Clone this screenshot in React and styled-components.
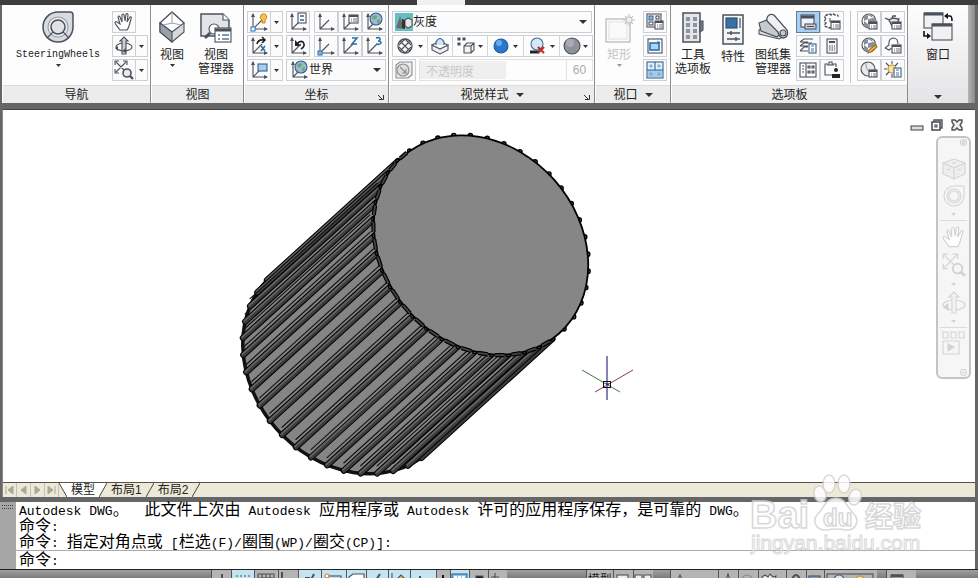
import React from 'react';
import styled, { createGlobalStyle } from 'styled-components';

const GlobalStyle = createGlobalStyle`
  * {
    box-sizing: border-box;
  }
  body {
    margin: 0;
    overflow: hidden;
    font-family: 'Liberation Sans', 'Noto Sans CJK SC', sans-serif;
    font-size: 12px;
    color: #222;
  }
  button, input, select {
    font: inherit;
    color: inherit;
    margin: 0;
    padding: 0;
    border: 0;
    background: none;
  }
  svg {
    display: block;
    flex: none;
  }
`;

const Page = styled.div`
  position: relative;
  display: flex;
  flex-direction: column;
  height: 100vh;
  background: #666;
  overflow: hidden;
`;

const TabStrip = styled.div`
  display: flex;
  justify-content: center;
  flex: 0 0 5px;
  padding-right: 96px;
  background: #3d3d3d;
`;

const ActiveTab = styled.div`
  width: 48px;
  background: #f0f0f0;
`;

/* ---------- ribbon ---------- */

const Ribbon = styled.div`
  display: flex;
  flex: 0 0 98px;
  margin: 0 3px 0 2px;
  background: #fdfdfd;
`;

const PanelBox = styled.section`
  display: flex;
  flex-direction: column;
  flex: ${({ $grow }) => ($grow ? 1 : 0)} 0 ${({ $width }) => $width}px;
  border-right: 1px solid #8d8d8d;
`;

const PanelBody = styled.div`
  display: flex;
  flex: 1;
  gap: ${({ $gap }) => $gap ?? 4}px;
  padding: 6px 0 0 ${({ $pad }) => $pad ?? 3}px;
`;

const PanelTitle = styled.div`
  display: flex;
  align-items: center;
  justify-content: center;
  height: 18px;
  margin-left: 1px;
  position: relative;
  border-top: 1px solid #dcdcdc;
  background: #ececec;
  line-height: 16px;
`;

const TitleButton = styled.button`
  display: flex;
  align-items: center;
  gap: 7px;
`;

const Launcher = styled.button`
  position: absolute;
  right: 4px;
  bottom: 3px;
`;

const Column = styled.div`
  display: flex;
  flex-direction: column;
  gap: 2px;
`;

const Row = styled.div`
  display: flex;
  gap: ${({ $gap }) => $gap || 0}px;
`;

const ToolGrid = styled.div`
  display: grid;
  grid-template-columns: 24px 24px;
  grid-auto-rows: 22px;
  row-gap: 2px;
  margin-left: ${({ $left }) => $left || 0}px;
`;

const Divider = styled.div`
  width: 1px;
  height: 72px;
  margin: 0 6px;
  background: #c4c4c4;
`;

const IconButton = styled.button`
  display: flex;
  align-items: center;
  justify-content: center;
  width: 24px;
  height: 22px;
  border: 1px solid ${({ $active }) => ($active ? '#5d7f9f' : '#ccd0d4')};
  background: ${({ $active }) => ($active ? '#a9d0f3' : '#fbfbfb')};
`;

const DropButton = styled(IconButton)`
  width: 12px;
  border-left: 0;
`;

const BigButton = styled.button`
  display: flex;
  flex-direction: column;
  align-items: center;
  width: ${({ $width }) => $width}px;
  height: ${({ $tall }) => ($tall ? '88px' : '72px')};
  color: ${({ disabled }) => (disabled ? '#c2c2c2' : '#222')};
  line-height: 14px;
  white-space: nowrap;
  & > svg:first-child {
    margin-bottom: 5px;
  }
  & > svg:last-child {
    margin-top: ${({ $tall }) => ($tall ? 'auto' : '2px')};
  }
`;

const MonoLabel = styled.span`
  font-family: 'Liberation Mono', monospace;
  font-size: 10px;
`;

const SelectBox = styled.label`
  display: flex;
  align-items: center;
  width: ${({ $width }) => $width}px;
  height: 22px;
  padding: 0 4px 0 2px;
  border: 1px solid #ccd0d4;
  background: #fbfbfb;
`;

const Select = styled.select`
  flex: 1;
  min-width: 0;
  appearance: none;
  outline: 0;
`;

const StyleRow = styled.div`
  display: grid;
  grid-template-columns: 35px 25px 35px 36px 36px 31px;
  height: 22px;
  border: 1px solid #ccd0d4;
`;

const StyleButton = styled.button`
  display: flex;
  align-items: center;
  justify-content: space-evenly;
  border-right: 1px solid #d3d6d9;
  &:last-child {
    border-right: 0;
  }
`;

const Opacity = styled.label`
  display: grid;
  grid-template-columns: 146px 26px;
  align-items: center;
  width: 174px;
  height: 22px;
  border: 1px solid #e2e2e2;
  color: #c9c9c9;
`;

const OpacityName = styled.span`
  grid-area: 1 / 1;
  padding-left: 6px;
  pointer-events: none;
`;

const OpacityRange = styled.input`
  grid-area: 1 / 1;
  appearance: none;
  width: 100%;
  height: 18px;
  background: linear-gradient(to right, #efefef 59%, #fdfdfd 59%);
  &::-webkit-slider-thumb {
    appearance: none;
    width: 0;
    height: 0;
  }
`;

const OpacityValue = styled.output`
  height: 20px;
  border-left: 1px solid #e2e2e2;
  line-height: 20px;
  text-align: center;
  color: #aaa;
`;

const WindowPanel = styled.div`
  display: flex;
  flex: 0 0 60px;
  justify-content: center;
  padding-top: 6px;
  background: linear-gradient(#fdfdfd, #e4e4e6);
`;

const RibbonEnd = styled.div`
  flex: 0 0 7px;
  background: linear-gradient(to right, #b5b5b5, #8a8a8a);
`;

/* ---------- drawing window ---------- */

const Drawing = styled.main`
  position: relative;
  display: flex;
  flex-direction: column;
  flex: 1;
  min-height: 0;
  margin: 6px 3px 5px 2px;
  border-top: 1px solid #444;
  border-left: 1px solid #888;
  background: #fff;
`;

const Canvas = styled.svg`
  flex: 1;
  width: 100%;
  min-height: 0;
`;

const WindowButtons = styled.div`
  position: absolute;
  top: 8px;
  right: 11px;
  display: flex;
  gap: 6px;
`;

const NavBar = styled.nav`
  position: absolute;
  top: 26px;
  right: 4px;
  display: flex;
  flex-direction: column;
  align-items: center;
  width: 35px;
  height: 243px;
  padding: 17px 0 0;
  border: 2px solid #c4c4c4;
  border-radius: 6px;
  background: #f6f6f6;
`;

const NavButton = styled.button`
  height: ${({ $height }) => $height}px;
`;

const NavRule = styled.div`
  width: 27px;
  height: 1px;
  background: #dcdcdc;
`;

const NavCorner = styled.button`
  position: absolute;
  right: 2px;
  ${({ $end }) => ($end ? 'bottom: 1px' : 'top: 1px')};
`;

const SheetTabs = styled.div`
  display: flex;
  flex: 0 0 15px;
  border-top: 1px solid #55533f;
  background: #ece9d8;
`;

const SheetStep = styled.button`
  display: flex;
  align-items: center;
  justify-content: center;
  width: 14px;
  border-right: 1px solid #c5c2b2;
`;

const SheetTab = styled.button`
  padding: 0 4px;
  background: ${({ $active }) => ($active ? '#fff' : 'none')};
  line-height: 14px;
  white-space: nowrap;
`;

/* ---------- command line ---------- */

const CommandArea = styled.section`
  display: flex;
  flex: 0 0 67px;
  margin-right: 3px;
  background: #fff;
`;

const Grip = styled.div`
  width: 16px;
  padding: 3px 2px;
  background: #a6a6a6;
`;

const CommandBody = styled.div`
  flex: 1;
  min-width: 0;
  font-family: 'Liberation Mono', 'Noto Sans CJK SC', monospace;
  font-size: 13px;
  color: #000;
`;

const History = styled.div`
  height: 49px;
  padding-left: 3px;
  border-bottom: 1px solid #aaa;
`;

const Line = styled.div`
  display: flex;
  align-items: baseline;
  gap: 8px;
  height: 16px;
  line-height: 12px;
  white-space: pre;
`;

const Wide = styled.span`
  font-family: 'Noto Sans CJK SC', sans-serif;
  font-size: 16px;
`;

const Prompt = styled.label`
  display: flex;
  align-items: baseline;
  height: 18px;
  padding-left: 3px;
  line-height: 14px;
`;

const PromptInput = styled.input`
  flex: 1;
  margin-left: 8px;
  outline: 0;
`;

const Watermark = styled.svg`
  position: absolute;
  right: 50px;
  bottom: 20px;
`;

/* ---------- status bar ---------- */

const StatusBar = styled.footer`
  display: flex;
  flex: 0 0 9px;
  overflow: hidden;
  border-top: 1px solid #222;
  background: linear-gradient(#a0a0a0, #7c7c7c);
`;

const StatusButton = styled.button`
  width: ${({ $width }) => $width}px;
  height: 20px;
  border-left: 1px solid #555;
  background: ${({ $on }) => ($on ? '#c3e4f0' : '#b4b4b4')};
  overflow: hidden;
  white-space: nowrap;
  line-height: 18px;
`;

const StatusSpace = styled.div`
  flex: ${({ $grow }) => $grow};
`;

/* ---------- icons ---------- */

const INK = '#4b515b';

function Icon({ w = 20, h = 20, color = INK, children }) {
    return (
        <svg width={w} height={h} viewBox={`0 0 ${w} ${h}`} fill="none" stroke={color} strokeWidth="1.1" aria-hidden="true">
            {children}
        </svg>
    );
}

function Arrow({ size = 5, color = '#333' }) {
    return (
        <svg width={size} height={size === 5 ? 3 : 4} viewBox="0 0 8 4" preserveAspectRatio="none">
            <path d="M0 0H8L4 4Z" fill={color} />
        </svg>
    );
}

function WheelShape() {
    return (
        <>
            <path d="M16 1H28Q31 1 31 4V16A15 15 0 1 1 16 1Z" fill="#d7dae0" strokeWidth="1.5" />
            <circle cx="16" cy="16" r="10" fill="#eceef1" stroke="#9a9ea6" />
            <circle cx="16" cy="16" r="7" fill="#dfe2e6" strokeWidth="1.5" />
            <path d="M11 21L5 27M21 21L27 27" />
        </>
    );
}

function HandShape() {
    return <path d="M6 18C4 15 2 13 1 11Q1 9 3 10L6 12L4 5Q5 3 6 5L8 10L8 3Q9 1 10 3L11 9L12 2Q14 1 14 3L13 10L16 5Q18 4 17 7L15 14Q14 17 13 18Z" fill="#fff" />;
}

function OrbitShape() {
    return (
        <>
            <ellipse cx="10" cy="11" rx="8" ry="4" />
            <path d="M8 18V5H6L10 1L14 5H12V18Z" fill="#c9ced6" />
            <path d="M1 12L4 10V15ZM8 15L12 12V17Z" fill={INK} stroke="none" />
        </>
    );
}

function ZoomShape({ lens = '#e6e8ec' }) {
    return (
        <>
            <path d="M2 2L11 11M12 2L2 12M1 5V1H5M9 1H13V5M1 9V13H5" />
            <circle cx="13" cy="13" r="4" fill={lens} strokeWidth="1.6" />
            <path d="M16 16L19 19" strokeWidth="2.4" />
        </>
    );
}

function Axes({ children }) {
    return (
        <Icon>
            <path d="M4 2V17H18M4 17L13 8" />
            <path d="M2 5L4 1L6 5ZM15 15L19 17L15 19Z" fill={INK} stroke="none" />
            {children}
        </Icon>
    );
}

function Globe({ x = 12, y = 7, r = 6 }) {
    return (
        <g>
            <circle cx={x} cy={y} r={r} fill="#8fbde0" stroke="#3f5e7c" />
            <path d={`M${x - 4} ${y - 2}q3 -3 5 -1q0 3 -2 3q-2 2 -3 -2M${x + 1} ${y + 1}q3 -2 3 1q-1 3 -3 2z`} fill="#7da36a" stroke="none" />
        </g>
    );
}

function ListShape({ x, y, w = 9, h = 8 }) {
    return (
        <g>
            <rect x={x} y={y} width={w} height={h} fill="#fff" />
            <path d={`M${x} ${y + 1}h${w}`} strokeWidth="2" />
            <path d={`M${x + 2} ${y + 4}h1m1 0h${w - 5}M${x + 2} ${y + 6}h1m1 0h${w - 5}`} strokeWidth="0.8" />
        </g>
    );
}

function CalcShape({ x, y, w = 7, h = 9 }) {
    return (
        <g stroke="#35618f">
            <rect x={x} y={y} width={w} height={h} fill="#fff" />
            <path d={`M${x + 2} ${y + 2}h${w - 4}M${x + 2} ${y + 5}h${w - 4}M${x + 2} ${y + 7}h${w - 4}`} strokeWidth="0.9" />
        </g>
    );
}

function MatBall() {
    return (
        <g>
            <circle cx="9" cy="8" r="7" fill="#fff" />
            <path d="M4 3L8 2V6L4 8ZM8 6L13 5V10L8 11ZM4 8L8 11V15L4 13ZM8 2L11 1L13 5ZM13 10L16 8V5L13 5Z" fill="#8a9099" stroke="none" />
        </g>
    );
}

function MoreButton() {
    return <DropButton aria-label="更多"><Arrow /></DropButton>;
}

/* ---------- model ---------- */

const RIBS = 40;
const CENTER = { x: 478, y: 135 };
const AXIS = { x: -131, y: 119 };
const MAJOR = 118;
const MINOR = 98;
const TILT = (48.6 * Math.PI) / 180;

const U = { x: Math.cos(TILT), y: Math.sin(TILT) };
const V = { x: -Math.sin(TILT), y: Math.cos(TILT) };

function rimPoint(t, grow = 0) {
    const a = (MAJOR + grow) * Math.cos(t);
    const b = (MINOR + grow) * Math.sin(t);
    return { x: CENTER.x + a * U.x + b * V.x, y: CENTER.y + a * U.y + b * V.y };
}

// positive where the side of the cylinder looks towards the viewer
function facing(t) {
    const nx = (Math.cos(t) / MAJOR) * U.x + (Math.sin(t) / MINOR) * V.x;
    const ny = (Math.cos(t) / MAJOR) * U.y + (Math.sin(t) / MINOR) * V.y;
    return nx * AXIS.x + ny * AXIS.y;
}

const angles = Array.from({ length: RIBS }, (_, i) => ((i * 9 + 5) * Math.PI) / 180);
const frontRibs = angles.filter((t) => facing(t) > -0.1).sort((a, b) => facing(a) - facing(b));

function Rib({ t }) {
    const p = rimPoint(t);
    const line = (dx, dy) => `M${p.x + dx} ${p.y + dy}l${AXIS.x} ${AXIS.y}`;
    return (
        <g strokeLinecap="round">
            {facing(t) > 0.55 && (
                <path d={`M${p.x - 4} ${p.y - 4}l${AXIS.x * 0.97} ${AXIS.y * 0.97}`} stroke="#151515" strokeWidth="1.2" />
            )}
            <path d={line(0, 0)} stroke="#000" strokeWidth="6.4" />
            <path d={line(0, 0)} stroke="#3c3c3c" strokeWidth="4.4" />
            <path d={line(-0.8, -0.8)} stroke="#636363" strokeWidth="1.7" />
        </g>
    );
}

function Cylinder() {
    const tilt = `rotate(48.6 ${CENTER.x} ${CENTER.y})`;
    const side = angles.filter((t) => facing(t) > 0).map((t) => rimPoint(t));
    const first = side[0];
    const last = side[side.length - 1];
    return (
        <g fill="none">
            <g transform={`translate(${AXIS.x} ${AXIS.y})`}>
                <ellipse cx={CENTER.x} cy={CENTER.y} rx={MAJOR} ry={MINOR} transform={tilt} fill="#858585" stroke="#111" strokeWidth="3.5" />
            </g>
            <path
                d={`M${first.x} ${first.y}l${AXIS.x} ${AXIS.y}L${last.x + AXIS.x} ${last.y + AXIS.y}L${last.x} ${last.y}Z`}
                fill="#858585"
            />
            {frontRibs.map((t) => <Rib key={t} t={t} />)}
            {angles.map((t) => {
                const p = rimPoint(t);
                return <circle key={t} cx={p.x} cy={p.y} r="2.2" fill="#666" stroke="#000" strokeWidth="1.3" />;
            })}
            <ellipse cx={CENTER.x} cy={CENTER.y} rx={MAJOR} ry={MINOR} transform={tilt} fill="#868686" stroke="#000" strokeWidth="1.8" />
            {frontRibs.map((t) => {
                const a = rimPoint(t + 0.035, 0.5);
                const b = rimPoint(t + 0.125, 0.5);
                return (
                    <g key={t}>
                        <path d={`M${a.x} ${a.y}L${b.x} ${b.y}`} stroke="#000" strokeWidth="4.2" />
                        <path d={`M${a.x} ${a.y}L${b.x} ${b.y}`} stroke="#444" strokeWidth="1.8" />
                    </g>
                );
            })}
        </g>
    );
}

function Crosshair() {
    return (
        <g fill="none">
            <path d="M579 260L617 282" stroke="#3d7a45" />
            <path d="M630 260L592 282" stroke="#8a3c46" />
            <path d="M604 246V290" stroke="#5a5a9c" strokeWidth="1.5" />
            <rect x="600.5" y="271.5" width="7" height="6" stroke="#111" />
            <path d="M603 274H606" stroke="#111" />
        </g>
    );
}

/* ---------- ribbon panels ---------- */

function Panel({ title, width, grow, pad, gap, launcher, drop, children }) {
    return (
        <PanelBox $width={width} $grow={grow}>
            <PanelBody $pad={pad} $gap={gap}>{children}</PanelBody>
            <PanelTitle>
                {drop ? <TitleButton>{title}<Arrow size={8} /></TitleButton> : title}
                {launcher && (
                    <Launcher aria-label={title}>
                        <svg width="6" height="6" viewBox="0 0 6 6" fill="none" stroke="#333">
                            <path d="M0 1L4 5M1 5.5H5.5V1" />
                        </svg>
                    </Launcher>
                )}
            </PanelTitle>
        </PanelBox>
    );
}

function NavigatePanel() {
    return (
        <Panel title="导航" width={149} pad={6}>
            <BigButton $width={100}>
                <Icon w={32} h={32}><WheelShape /></Icon>
                <MonoLabel>SteeringWheels</MonoLabel>
                <Arrow />
            </BigButton>
            <Column>
                <IconButton aria-label="平移"><Icon><HandShape /></Icon></IconButton>
                <Row>
                    <IconButton aria-label="动态观察"><Icon><OrbitShape /></Icon></IconButton>
                    <MoreButton />
                </Row>
                <Row>
                    <IconButton aria-label="范围"><Icon><ZoomShape /></Icon></IconButton>
                    <MoreButton />
                </Row>
            </Column>
        </Panel>
    );
}

function ViewPanel() {
    return (
        <Panel title="视图" width={93} pad={4}>
            <BigButton $width={34}>
                <Icon w={26} h={32}>
                    <path d="M13 1L25 12V21L13 31L1 21V12Z" fill="#d5d8dd" />
                    <path d="M13 1L25 12L13 21L1 12Z" fill="#fff" />
                    <path d="M1 12L13 21V31L1 21Z" fill="#9aa0a9" />
                    <path d="M13 1V12L4 14M13 12L22 14" stroke="#a0a5ad" />
                </Icon>
                视图
                <Arrow />
            </BigButton>
            <BigButton $width={46}>
                <Icon w={32} h={32}>
                    <path d="M1 3H23L29 9V25H1Z" fill="#e2e4e9" strokeWidth="1.5" />
                    <path d="M23 3V9H29" fill="#fff" />
                    <circle cx="14" cy="18" r="5" fill="#fff" />
                    <path d="M10 22L5 27" strokeWidth="3" />
                    <rect x="15" y="17" width="16" height="14" fill="#fff" />
                    <path d="M15 19H31" strokeWidth="3" />
                    <path d="M18 24H20M22 24H29M18 28H20M22 28H29" stroke="#55779c" strokeWidth="1.5" />
                </Icon>
                <span>视图<br />管理器</span>
            </BigButton>
        </Panel>
    );
}

function CoordinatesPanel() {
    return (
        <Panel title="坐标" width={145} gap={3} launcher>
            <Column>
                <Row>
                    <IconButton aria-label="UCS 图标">
                        <Axes>
                            <rect x="2" y="15" width="4" height="4" fill="#fff" stroke="#2c7fc0" />
                            <path d="M13 11V8Q10 6 12 3Q15 0 17 3Q19 6 16 8V11Z" fill="#f6c14d" stroke="#c98a1c" strokeWidth="1" />
                        </Axes>
                    </IconButton>
                    <MoreButton />
                </Row>
                <Row>
                    <IconButton aria-label="绕 X 轴旋转">
                        <Axes>
                            <path d="M8 8Q9 3 15 4M13 1L16 4L13 7" stroke="#222" strokeWidth="1.6" />
                            <path d="M12 10L16 15M16 10L12 15" stroke="#2c6fae" strokeWidth="1.6" />
                        </Axes>
                    </IconButton>
                    <MoreButton />
                </Row>
                <Row>
                    <IconButton aria-label="UCS 视图">
                        <Axes><rect x="9" y="4" width="9" height="7" fill="#a7cdf0" stroke="#35618f" /></Axes>
                    </IconButton>
                    <MoreButton />
                </Row>
            </Column>
            <Column>
                <Row $gap={4}>
                    <IconButton aria-label="UCS">
                        <Axes><rect x="10" y="1" width="8" height="10" fill="#fff" /><path d="M12 4H16M12 8H16" stroke="#35618f" strokeWidth="1.6" /></Axes>
                    </IconButton>
                    <Row>
                        <IconButton aria-label="UCS 原点"><Axes /></IconButton>
                        <IconButton aria-label="命名 UCS"><Axes><ListShape x={9} y={3} /></Axes></IconButton>
                        <IconButton aria-label="世界 UCS"><Axes><Globe /></Axes></IconButton>
                    </Row>
                </Row>
                <Row $gap={4}>
                    <IconButton aria-label="上一个 UCS">
                        <Axes>
                            <path d="M9 8Q12 4 15 6Q18 10 13 13" stroke="#222" strokeWidth="1.6" />
                            <path d="M7 4V10H13Z" fill="#222" stroke="none" />
                        </Axes>
                    </IconButton>
                    <Row>
                        <IconButton aria-label="原点"><Axes><rect x="2" y="15" width="4" height="4" fill="#7db7e6" stroke="#2c7fc0" /></Axes></IconButton>
                        <IconButton aria-label="Z 轴矢量"><Axes><path d="M12 2H17L12 8H17" stroke="#2c6fae" strokeWidth="1.6" /></Axes></IconButton>
                        <IconButton aria-label="三点"><Axes><path d="M12 2Q16 1 16 3Q16 5 14 5Q17 5 17 7Q16 9 12 8" stroke="#2c6fae" strokeWidth="1.6" /></Axes></IconButton>
                    </Row>
                </Row>
                <SelectBox $width={100}>
                    <Axes><Globe /></Axes>
                    <Select aria-label="坐标系" defaultValue="世界"><option>世界</option></Select>
                    <Arrow size={8} />
                </SelectBox>
            </Column>
        </Panel>
    );
}

function VisualStylesPanel() {
    return (
        <Panel title="视觉样式" width={206} drop launcher>
            <Column>
                <SelectBox $width={200}>
                    <Icon w={18} h={18}>
                        <rect width="18" height="18" fill="#63bfc4" stroke="none" />
                        <path d="M1 15L5 3L9 16Z" fill="#6a6a6a" stroke="none" />
                        <path d="M10 7L13 5L17 7V13L13 15L10 13Z" fill="#e8e8e8" stroke="#555" />
                        <path d="M7 6L10 7V16L7 15Z" fill="#333" stroke="none" />
                    </Icon>
                    <Select aria-label="视觉样式" defaultValue="灰度"><option>灰度</option></Select>
                    <Arrow size={8} />
                </SelectBox>
                <StyleRow>
                    <StyleButton aria-label="X 射线">
                        <Icon w={16} h={16}>
                            <circle cx="8" cy="8" r="7" strokeWidth="1.3" />
                            <path d="M3 3L13 13M13 3L3 13M8 1L2 7M8 1L14 7M8 15L2 9M8 15L14 9" strokeWidth="1.1" />
                        </Icon>
                        <Arrow />
                    </StyleButton>
                    <StyleButton aria-label="面样式">
                        <Icon w={18} h={18}>
                            <path d="M1 8L9 12L17 8V13L9 17L1 13Z" fill="#eceef1" />
                            <path d="M1 8L9 4L17 8L9 12Z" fill="#fff" />
                            <path d="M5 8V5Q9 -2 13 5V8" fill="#cfe5f7" stroke="#35618f" />
                        </Icon>
                    </StyleButton>
                    <StyleButton aria-label="边">
                        <Icon w={18} h={18}>
                            <path d="M1 1H3V3H1ZM6 1H8V3H6ZM1 6H3V8H1Z" fill={INK} />
                            <path d="M7 9L10 6H17V13L14 16H7ZM7 9H14V16M14 9L17 6" fill="#f2f2f2" />
                        </Icon>
                        <Arrow />
                    </StyleButton>
                    <StyleButton aria-label="光源">
                        <Icon w={16} h={16}>
                            <circle cx="8" cy="8" r="7" fill="#2878cf" stroke="#1f5c9e" />
                            <circle cx="6" cy="5" r="3" fill="#6caae8" stroke="none" />
                        </Icon>
                        <Arrow />
                    </StyleButton>
                    <StyleButton aria-label="无阴影">
                        <Icon w={18} h={18}>
                            <circle cx="9" cy="7" r="6" fill="#d4e8f7" stroke="#46729c" />
                            <path d="M2 15H11" stroke="#222" strokeWidth="3" />
                            <path d="M10 10L16 16M16 10L10 16" stroke="#c02b2b" strokeWidth="2.2" />
                        </Icon>
                        <Arrow />
                    </StyleButton>
                    <StyleButton aria-label="材质">
                        <Icon w={18} h={18}>
                            <circle cx="9" cy="9" r="8" fill="#8e939a" />
                            <circle cx="7" cy="6" r="4" fill="#a9adb3" stroke="none" />
                        </Icon>
                        <Arrow />
                    </StyleButton>
                </StyleRow>
                <Row $gap={3}>
                    <IconButton aria-label="X 射线效果">
                        <Icon color="#8e8e8e">
                            <path d="M2 5L6 2H18V15L14 18H2Z" fill="#ececec" />
                            <circle cx="9" cy="10" r="6" fill="#ddd" />
                            <path d="M6 7L12 13M12 9V13H8" />
                        </Icon>
                    </IconButton>
                    <Opacity>
                        <OpacityRange type="range" min="0" max="100" defaultValue="60" disabled />
                        <OpacityName>不透明度</OpacityName>
                        <OpacityValue>60</OpacityValue>
                    </Opacity>
                </Row>
            </Column>
        </Panel>
    );
}

function ViewportPanel() {
    return (
        <Panel title="视口" width={76} pad={6} gap={6} drop>
            <BigButton $width={36} disabled>
                <Icon w={32} h={32} color="#c4c4c4">
                    <rect x="3" y="8" width="24" height="23" fill="#fafafa" strokeWidth="1.5" />
                    <rect x="6" y="11" width="18" height="17" stroke="#e2e2e2" />
                    <path d="M26 3V15M20 9H32M22 5L30 13M30 5L22 13" />
                    <circle cx="26" cy="9" r="3" fill="#f6efe4" />
                </Icon>
                矩形
                <Arrow color="#999" />
            </BigButton>
            <Column>
                <IconButton aria-label="命名视口">
                    <Icon w={18} h={18}>
                        <rect x="1" y="1" width="14" height="13" fill="#fff" />
                        <rect x="3" y="3" width="4" height="4" fill="#86c3ec" stroke="#35618f" />
                        <rect x="10" y="3" width="3" height="3" />
                        <rect x="3" y="9" width="4" height="3" />
                        <ListShape x={9} y={8} w={8} h={8} />
                    </Icon>
                </IconButton>
                <IconButton aria-label="裁剪视口">
                    <Icon w={18} h={18}>
                        <rect x="2" y="2" width="14" height="14" fill="#fff" />
                        <rect x="4" y="6" width="9" height="7" fill="#a9d4f3" stroke="#2c6fae" strokeWidth="1.6" />
                        <path d="M12 4V6M14 5L12 7" stroke="#2c6fae" />
                    </Icon>
                </IconButton>
                <IconButton aria-label="合并视口">
                    <Icon w={18} h={18}>
                        <rect x="1" y="1" width="16" height="16" fill="#e6f1fa" stroke="#35618f" />
                        <rect x="2" y="9" width="14" height="7" fill="#9dccf0" stroke="none" />
                        <path d="M9 1V9M1 9H17" stroke="#35618f" />
                        <path d="M4 4H6V6H4ZM12 4H14V6H12ZM4 12H6V14H4ZM12 12H14V14H12Z" stroke="#7ba3c6" strokeWidth="1" />
                    </Icon>
                </IconButton>
            </Column>
        </Panel>
    );
}

function PalettesPanel() {
    return (
        <Panel title="选项板" width={237} pad={2} gap={0} grow>
            <BigButton $width={40}>
                <Icon w={24} h={32}>
                    <rect x="2" y="2" width="17" height="29" fill="#e4e6ea" strokeWidth="1.5" />
                    <path d="M19 10H22V19L19 21Z" fill="#777d87" />
                    <path d="M5 6H9V10H5ZM12 6H16V10H12ZM5 12H9V16H5ZM12 12H16V16H12ZM5 18H9V22H5ZM12 18H16V22H12ZM5 24H9V28H5ZM12 24H16V28H12Z" fill="#8e949d" stroke="none" />
                </Icon>
                <span>工具<br />选项板</span>
            </BigButton>
            <BigButton $width={40}>
                <Icon w={24} h={32}>
                    <rect x="2" y="2" width="20" height="29" fill="#f3f4f6" strokeWidth="1.5" />
                    <rect x="5" y="5" width="11" height="10" fill="#3a6fa3" stroke="#294c70" />
                    <path d="M19 5V15" stroke="#8e949d" strokeWidth="2" />
                    <path d="M6 20H19M6 26H19M10 18V22M15 24V28" strokeWidth="1.5" />
                </Icon>
                特性
            </BigButton>
            <BigButton $width={40}>
                <Icon w={32} h={32}>
                    <path d="M2 19L11 14L26 26L22 28L2 23Z" fill="#dfe2e7" />
                    <path d="M2 12L10 9L24 22L20 26L4 20Z" fill="#c5c9d0" />
                    <path d="M10 7Q12 2 17 4L30 19Q32 25 27 27Q22 27 21 21L11 11Q9 9 10 7Z" fill="#eef0f3" strokeWidth="1.3" />
                    <circle cx="26" cy="22" r="3" fill="#c6cad1" />
                </Icon>
                <span>图纸集<br />管理器</span>
            </BigButton>
            <ToolGrid $left={3}>
                <IconButton $active aria-label="命令行">
                    <Icon w={18} h={18}>
                        <rect x="2" y="2" width="13" height="12" fill="#eef4fa" />
                        <path d="M2 4H15" strokeWidth="3" />
                        <rect x="6" y="11" width="11" height="5" fill="#d3d7dc" />
                        <path d="M8 13.5H15" />
                    </Icon>
                </IconButton>
                <IconButton aria-label="标记集管理器">
                    <Icon w={18} h={18}>
                        <path d="M3 6Q0 3 4 2Q6 0 8 2Q10 0 12 2Q16 1 15 5M3 6Q0 8 3 10Q0 13 4 14Q6 16 8 14" strokeDasharray="3 1" strokeWidth="1.4" />
                        <path d="M7 5V9" />
                        <ListShape x={8} y={8} w={9} h={8} />
                    </Icon>
                </IconButton>
                <IconButton aria-label="图层特性">
                    <Icon w={18} h={18}>
                        <path d="M1 5L5 2H14M1 9L5 6H13M1 14L5 10H9M1 5H9M1 9H9M1 14H9" />
                        <CalcShape x={10} y={7} />
                    </Icon>
                </IconButton>
                <IconButton aria-label="快速计算器">
                    <Icon w={18} h={18}>
                        <rect x="4" y="2" width="10" height="14" fill="#f3f3f3" />
                        <path d="M6 5H12" strokeWidth="2" />
                        <path d="M6 9H12M6 11H12M6 13H12" strokeDasharray="1.5 1" strokeWidth="1.2" />
                    </Icon>
                </IconButton>
                <IconButton aria-label="设计中心">
                    <Icon w={18} h={18}>
                        <rect x="1" y="2" width="16" height="14" fill="#fff" />
                        <path d="M7 2V16M3 5H5M3 8H5M3 11H5" />
                        <path d="M9 5H11V7H9ZM13 5H15V7H13ZM9 10H11V12H9ZM13 10H15V12H13Z" fill="#b5bac1" />
                    </Icon>
                </IconButton>
                <IconButton aria-label="数据库连接">
                    <Icon w={18} h={18}>
                        <path d="M13 6V3H9M5 3H2V14H9" />
                        <path d="M6 4V1H9V4ZM4 4H11" fill="#fff" />
                        <circle cx="13" cy="9" r="2" fill="#222" stroke="none" />
                        <path d="M9 17V13H17V17Z" fill="#222" stroke="none" />
                    </Icon>
                </IconButton>
            </ToolGrid>
            <Divider />
            <ToolGrid>
                <IconButton aria-label="材质"><Icon w={18} h={18}><MatBall /><ListShape x={9} y={9} w={8} h={7} /></Icon></IconButton>
                <IconButton aria-label="渲染设置">
                    <Icon w={18} h={18}>
                        <path d="M1 5L5 7L8 13H12L15 6L8 5L9 3H12M5 7L9 5" fill="#e3e5e9" strokeWidth="1.3" />
                        <ListShape x={8} y={9} w={9} h={7} />
                    </Icon>
                </IconButton>
                <IconButton aria-label="材质编辑器">
                    <Icon w={18} h={18}><MatBall /><path d="M8 16L9 13L15 8L17 10L11 15Z" fill="#f0b450" stroke="#a06f22" /></Icon>
                </IconButton>
                <IconButton aria-label="视觉样式管理器">
                    <Icon w={18} h={18}>
                        <path d="M1 11L5 8Q4 2 9 1Q14 1 14 7M1 11L5 13L8 11" />
                        <ListShape x={8} y={8} w={9} h={8} />
                    </Icon>
                </IconButton>
                <IconButton aria-label="高级渲染">
                    <Icon w={18} h={18}>
                        <circle cx="8" cy="8" r="7" fill="#e7e9ec" />
                        <path d="M6 2Q5 9 12 12" stroke="#a0a5ad" />
                        <ListShape x={9} y={9} w={8} h={7} />
                    </Icon>
                </IconButton>
                <IconButton aria-label="模型中的光源">
                    <Icon w={18} h={18}>
                        <path d="M8 0V3M8 13V17M0 8H3M2 2L5 5M14 2L11 5M2 14L5 11" />
                        <circle cx="8" cy="8" r="4" fill="#fae2a0" stroke="#b98d32" />
                        <CalcShape x={10} y={7} />
                    </Icon>
                </IconButton>
            </ToolGrid>
        </Panel>
    );
}

const NAV = '#d3d3d3';

function NavigationBar() {
    return (
        <NavBar aria-label="导航栏">
            <NavCorner aria-label="关闭">
                <Icon w={7} h={7} color={NAV}><circle cx="3.5" cy="3.5" r="3" /><path d="M2 2L5 5M5 2L2 5" /></Icon>
            </NavCorner>
            <NavButton $height={28} aria-label="ViewCube">
                <Icon w={24} h={22} color={NAV}>
                    <path d="M1 5L12 1L23 5V16L12 21L1 16Z" fill="#eee" />
                    <path d="M1 5L12 10L23 5M12 10V21M5 11L8 12M16 12L19 11M10 5H14" />
                </Icon>
            </NavButton>
            <NavButton $height={25} aria-label="全导航控制盘">
                <Icon w={22} h={22} color={NAV}>
                    <path d="M11 1H21V11A10 10 0 1 1 11 1Z" />
                    <circle cx="11" cy="11" r="5" />
                    <circle cx="11" cy="11" r="7" />
                </Icon>
            </NavButton>
            <NavButton $height={12} aria-label="更多控制盘"><Arrow color={NAV} /></NavButton>
            <NavRule />
            <NavButton $height={31} aria-label="平移">
                <svg width="24" height="26" viewBox="0 0 20 20" fill="none" stroke={NAV}><HandShape /></svg>
            </NavButton>
            <NavButton $height={26} aria-label="范围缩放">
                <svg width="24" height="24" viewBox="0 0 20 20" fill="none" stroke={NAV}><ZoomShape lens="#f6f6f6" /></svg>
            </NavButton>
            <NavButton $height={12} aria-label="更多缩放"><Arrow color={NAV} /></NavButton>
            <NavButton $height={25} aria-label="动态观察">
                <Icon w={24} h={24} color={NAV}>
                    <ellipse cx="12" cy="14" rx="11" ry="5" />
                    <path d="M10 22V6H7L12 1L17 6H14V22Z" fill="#f3f3f3" />
                    <path d="M2 16L6 13V19Z" fill={NAV} />
                </Icon>
            </NavButton>
            <NavButton $height={12} aria-label="更多观察"><Arrow color={NAV} /></NavButton>
            <NavRule />
            <NavButton $height={30} aria-label="ShowMotion">
                <Icon w={24} h={24} color={NAV}>
                    <path d="M1 1H6V7H1ZM9 1H14V7H9ZM17 1H22V7H17ZM1 10H17V23H1Z" />
                    <path d="M6 13L12 16L6 20Z" fill={NAV} />
                </Icon>
            </NavButton>
            <NavCorner $end aria-label="选项">
                <Icon w={7} h={7} color={NAV}><circle cx="3.5" cy="3.5" r="3" /><path d="M2 3.5H5" /></Icon>
            </NavCorner>
        </NavBar>
    );
}

const sheetSteps = [
    { label: '第一个', d: 'M1 0V8M8 0L3 4L8 8Z' },
    { label: '上一个', d: 'M7 0L2 4L7 8Z' },
    { label: '下一个', d: 'M2 0L7 4L2 8Z' },
    { label: '最后一个', d: 'M1 0L6 4L1 8ZM8 0V8' },
];

function Slant({ left, right, back }) {
    return (
        <svg width="8" height="14" viewBox="0 0 8 14" fill="none">
            <path d={back ? 'M0 0H8V14Z' : 'M0 0H8L0 14Z'} fill={back ? right : left} />
            <path d={back ? 'M0 0L8 14' : 'M8 0L0 14'} stroke="#444" />
        </svg>
    );
}

function Paw() {
    return (
        <g>
            <ellipse cx="70" cy="20" rx="6" ry="8" transform="rotate(-15 70 20)" />
            <ellipse cx="79" cy="10" rx="6" ry="9" />
            <ellipse cx="94" cy="10" rx="6" ry="9" />
            <ellipse cx="105" cy="23" rx="6" ry="8" transform="rotate(20 105 23)" />
            <path d="M86 24C96 24 97 34 104 40C110 46 106 57 96 56Q86 54 77 56C66 57 62 47 67 41C74 34 76 24 86 24Z" />
        </g>
    );
}

export default function App() {
    return (
        <Page>
            <GlobalStyle />
            <TabStrip><ActiveTab /></TabStrip>
            <Ribbon>
                <NavigatePanel />
                <ViewPanel />
                <CoordinatesPanel />
                <VisualStylesPanel />
                <ViewportPanel />
                <PalettesPanel />
                <WindowPanel>
                    <BigButton $width={40} $tall>
                        <Icon w={32} h={32}>
                            <rect x="2" y="2" width="19" height="15" fill="#f0f1f3" />
                            <path d="M2 3H21" strokeWidth="3" />
                            <rect x="10" y="13" width="20" height="16" fill="#f0f1f3" />
                            <path d="M10 14H30" strokeWidth="3" />
                            <path d="M24 5H28Q30 5 30 10M2 20V25H6" stroke="#111" strokeWidth="1.6" />
                            <path d="M22 5L26 2V8ZM9 25L5 22V28Z" fill="#111" stroke="none" />
                        </Icon>
                        窗口
                        <Arrow size={8} />
                    </BigButton>
                </WindowPanel>
                <RibbonEnd />
            </Ribbon>

            <Drawing>
                <Canvas viewBox="0 0 972 372" preserveAspectRatio="xMidYMid meet">
                    <Cylinder />
                    <Crosshair />
                </Canvas>
                <WindowButtons>
                    <button aria-label="最小化"><Icon w={14} h={14}><rect x="1" y="8" width="12" height="4" fill="#ddd" /></Icon></button>
                    <button aria-label="还原">
                        <Icon w={14} h={14}>
                            <path d="M4 4V2H12V10H10" fill="#ddd" strokeWidth="1.4" />
                            <rect x="2" y="4" width="8" height="8" fill="#fff" strokeWidth="1.6" />
                            <rect x="5" y="7" width="2" height="2" />
                        </Icon>
                    </button>
                    <button aria-label="关闭">
                        <Icon w={14} h={14}>
                            <path d="M2 2H5L7 4L9 2H12V4L10 7L12 10V12H9L7 10L5 12H2V10L4 7L2 4Z" fill="#eee" strokeWidth="1.4" />
                        </Icon>
                    </button>
                </WindowButtons>
                <NavigationBar />
                <SheetTabs>
                    {sheetSteps.map(({ label, d }) => (
                        <SheetStep key={label} aria-label={label}>
                            <svg width="9" height="8" viewBox="0 0 9 8"><path d={d} fill="#aaa793" stroke="#aaa793" /></svg>
                        </SheetStep>
                    ))}
                    <Slant back right="#fff" />
                    <SheetTab $active>模型</SheetTab>
                    <Slant left="#fff" />
                    <SheetTab>布局1</SheetTab>
                    <Slant left="none" />
                    <SheetTab>布局2</SheetTab>
                    <Slant left="none" />
                </SheetTabs>
            </Drawing>

            <CommandArea>
                <Grip>
                    <svg width="12" height="4" viewBox="0 0 12 4" stroke="#444" strokeDasharray="1 1"><path d="M0 0.5H12M0 3.5H12" /></svg>
                </Grip>
                <CommandBody>
                    <History>
                        <Line>
                            <span>Autodesk DWG<Wide>。</Wide></span>
                            <span> <Wide>此文件上次由</Wide></span>
                            <span>Autodesk</span>
                            <Wide>应用程序或</Wide>
                            <span>Autodesk</span>
                            <Wide>许可的应用程序保存，是可靠的</Wide>
                            <span>DWG<Wide>。</Wide></span>
                        </Line>
                        <Line><span><Wide>命令</Wide>:</span></Line>
                        <Line>
                            <span><Wide>命令</Wide>:</span>
                            <Wide>指定对角点或</Wide>
                            <span>[<Wide>栏选</Wide>(F)/<Wide>圈围</Wide>(WP)/<Wide>圈交</Wide>(CP)]:</span>
                        </Line>
                    </History>
                    <Prompt>
                        <span><Wide>命令</Wide>:</span>
                        <PromptInput type="text" />
                    </Prompt>
                </CommandBody>
            </CommandArea>

            <StatusBar>
                <StatusSpace $grow={213} />
                <StatusButton $width={20}><Icon h={16}><path d="M10 2V14M6 8H14" strokeWidth="2" /></Icon></StatusButton>
                <StatusButton $width={23} $on><Icon h={16}><path d="M4 4H18M4 8H18" strokeDasharray="2 2" /></Icon></StatusButton>
                <StatusButton $width={24}><Icon h={16}><path d="M3 2H19V14H3ZM7 2V14M11 2V14M15 2V14M3 6H19M3 10H19" /></Icon></StatusButton>
                <StatusButton $width={20}><Icon h={16}><path d="M3 0V14H14" strokeWidth="2" /></Icon></StatusButton>
                <StatusButton $width={23} $on><Icon h={16}><path d="M6 6H11M15 2L11 10" strokeWidth="2" /></Icon></StatusButton>
                <StatusButton $width={25} $on><Icon h={16}><rect x="6" y="4" width="13" height="9" /><circle cx="5" cy="4" r="2" fill="#fff" stroke="#d08030" /></Icon></StatusButton>
                <StatusButton $width={20} $on><Icon h={16}><path d="M2 5L6 2H17V10L13 14H2Z" fill="#fff" /></Icon></StatusButton>
                <StatusButton $width={22} $on><Icon h={16}><path d="M4 8H9L13 2" strokeWidth="2" /></Icon></StatusButton>
                <StatusButton $width={22} $on><Icon h={16}><path d="M3 1V14M5 10L12 3L15 6L9 12Z" fill="#f0b450" /></Icon></StatusButton>
                <StatusButton $width={26} $on><Icon h={16}><path d="M9 4V14M5 8H13" strokeWidth="2" /></Icon></StatusButton>
                <StatusButton $width={14}><Icon w={12} h={16}><path d="M6 3V14" stroke="#111" strokeWidth="2" /></Icon></StatusButton>
                <StatusButton $width={19} $on><Icon w={18} h={16}><rect x="1" y="2" width="15" height="12" fill="#8dc4ed" stroke="#35618f" /><path d="M3 5H14" stroke="#fff" strokeDasharray="3 1" strokeWidth="2" /></Icon></StatusButton>
                <StatusButton $width={19}><Icon w={18} h={16}><path d="M6 4H13V12H6Z" fill="#222" /></Icon></StatusButton>
                <StatusButton $width={19}><Icon w={18} h={16}><path d="M6 1V9M2 5H10" /></Icon></StatusButton>
                <StatusSpace $grow={79} />
                <StatusButton $width={27}>模型</StatusButton>
                <StatusButton $width={20}><Icon w={18} h={16}><rect x="3" y="3" width="11" height="12" fill="#eee" /></Icon></StatusButton>
                <StatusButton $width={20}><Icon w={18} h={16}><path d="M1 3H8V15H1ZM10 3H17V15H10Z" fill="#eee" /></Icon></StatusButton>
                <StatusSpace $grow={17} />
                <StatusButton $width={48}><Icon h={16}><path d="M4 14L9 3L14 14" /></Icon></StatusButton>
                <StatusButton $width={20}><Icon w={18} h={16}><path d="M5 14L9 2L13 14" /></Icon></StatusButton>
                <StatusButton $width={20}><Icon w={18} h={16} color="#888"><circle cx="8" cy="8" r="5" /></Icon></StatusButton>
                <StatusButton $width={28}><Icon h={16}><path d="M5 8L3 5L6 3L9 5L11 2L14 5L17 4L16 8V14H5Z" fill="#eee" /></Icon></StatusButton>
                <StatusButton $width={20}><Icon w={18} h={16}><path d="M5 10V7Q9 -1 13 7V12" strokeWidth="2" /></Icon></StatusButton>
                <StatusButton $width={18}><Icon w={16} h={16}><rect x="2" y="4" width="11" height="10" fill="#7f9cba" /></Icon></StatusButton>
                <StatusButton $width={53}>
                    <Icon w={50} h={16}>
                        <rect x="2" y="2" width="46" height="16" />
                        <circle cx="14" cy="8" r="5" fill="#d4e8f7" />
                        <circle cx="35" cy="8" r="4" fill="#f7dc90" stroke="#b98d32" />
                    </Icon>
                </StatusButton>
                <StatusSpace $grow={10} />
                <StatusButton $width={30}><Icon w={26} h={16}><rect x="4" y="3" width="12" height="12" fill="#eee" /><path d="M4 4H16" strokeWidth="3" /></Icon></StatusButton>
                <StatusSpace $grow={62} />
            </StatusBar>

            <Watermark width="178" height="84" viewBox="0 0 178 84" opacity="0.85">
                <g fill="#fff" stroke="#d2d2d2" strokeWidth="1.5" fontFamily="Liberation Sans, sans-serif">
                    <text x="0" y="54" fontSize="38" fontWeight="700">Bai</text>
                    <Paw />
                    <text x="73" y="52" fontSize="24" fontWeight="700">du</text>
                    <text x="115" y="53" fontSize="28" fontWeight="700" fontFamily="Noto Sans CJK SC, sans-serif">经验</text>
                    <text x="1" y="76" fontSize="21" strokeWidth="1">jingyan.baidu.com</text>
                </g>
            </Watermark>
        </Page>
    );
}
